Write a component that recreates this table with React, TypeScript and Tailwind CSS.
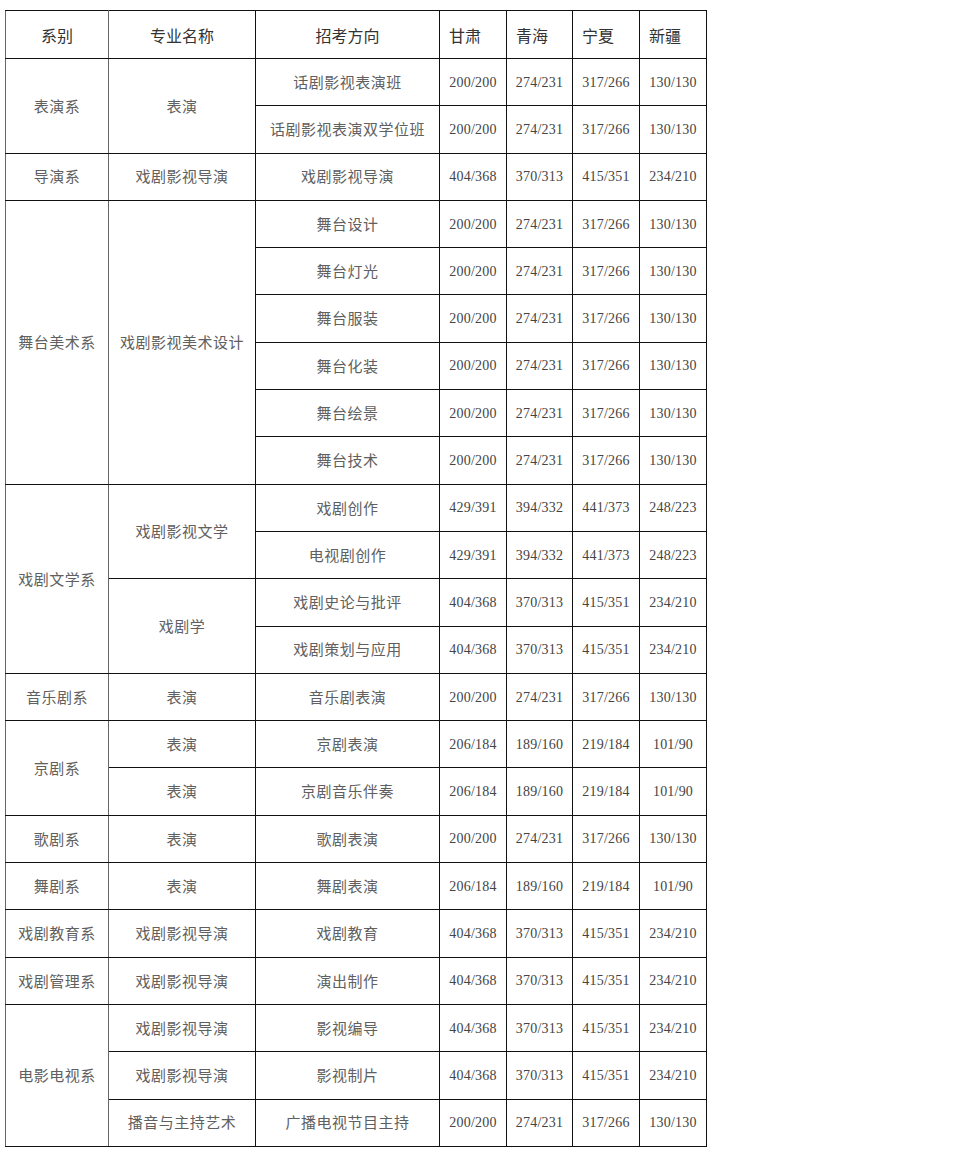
import React from 'react';

type Row = {
  dept?: { name: string; span: number };
  major?: { name: string; span: number };
  dir: string;
  scores: string[];
};

const A = ['200/200', '274/231', '317/266', '130/130'];
const B = ['404/368', '370/313', '415/351', '234/210'];
const C = ['429/391', '394/332', '441/373', '248/223'];
const D = ['206/184', '189/160', '219/184', '101/90'];

const rows: Row[] = [
  { dept: { name: '表演系', span: 2 }, major: { name: '表演', span: 2 }, dir: '话剧影视表演班', scores: A },
  { dir: '话剧影视表演双学位班', scores: A },
  { dept: { name: '导演系', span: 1 }, major: { name: '戏剧影视导演', span: 1 }, dir: '戏剧影视导演', scores: B },
  { dept: { name: '舞台美术系', span: 6 }, major: { name: '戏剧影视美术设计', span: 6 }, dir: '舞台设计', scores: A },
  { dir: '舞台灯光', scores: A },
  { dir: '舞台服装', scores: A },
  { dir: '舞台化装', scores: A },
  { dir: '舞台绘景', scores: A },
  { dir: '舞台技术', scores: A },
  { dept: { name: '戏剧文学系', span: 4 }, major: { name: '戏剧影视文学', span: 2 }, dir: '戏剧创作', scores: C },
  { dir: '电视剧创作', scores: C },
  { major: { name: '戏剧学', span: 2 }, dir: '戏剧史论与批评', scores: B },
  { dir: '戏剧策划与应用', scores: B },
  { dept: { name: '音乐剧系', span: 1 }, major: { name: '表演', span: 1 }, dir: '音乐剧表演', scores: A },
  { dept: { name: '京剧系', span: 2 }, major: { name: '表演', span: 1 }, dir: '京剧表演', scores: D },
  { major: { name: '表演', span: 1 }, dir: '京剧音乐伴奏', scores: D },
  { dept: { name: '歌剧系', span: 1 }, major: { name: '表演', span: 1 }, dir: '歌剧表演', scores: A },
  { dept: { name: '舞剧系', span: 1 }, major: { name: '表演', span: 1 }, dir: '舞剧表演', scores: D },
  { dept: { name: '戏剧教育系', span: 1 }, major: { name: '戏剧影视导演', span: 1 }, dir: '戏剧教育', scores: B },
  { dept: { name: '戏剧管理系', span: 1 }, major: { name: '戏剧影视导演', span: 1 }, dir: '演出制作', scores: B },
  { dept: { name: '电影电视系', span: 3 }, major: { name: '戏剧影视导演', span: 1 }, dir: '影视编导', scores: B },
  { major: { name: '戏剧影视导演', span: 1 }, dir: '影视制片', scores: B },
  { major: { name: '播音与主持艺术', span: 1 }, dir: '广播电视节目主持', scores: A },
];

const cjk = "font-['Noto_Sans_CJK_SC',sans-serif]";
const cell = 'border border-[#111] p-0 align-middle';
const body = `text-center text-[15px] tracking-[0.5px] text-[#606060] ${cjk}`;

const App = () => {
  return (
    <div className="min-h-[1152px] w-[976px] bg-white pl-[5px] pt-[10px]">
      <table className="w-[701px] table-fixed border-collapse border-l border-l-[#666]">
        <colgroup>
          <col className="w-[103px]" />
          <col className="w-[147px]" />
          <col className="w-[184px]" />
          <col className="w-[67px]" />
          <col className="w-[66px]" />
          <col className="w-[67px]" />
          <col className="w-[67px]" />
        </colgroup>
        <thead>
          <tr className="h-[48px]">
            <th className={`${cell} border-l-[#666] border-r-[#666] text-center text-[16px] font-normal text-[#333] ${cjk}`}>系别</th>
            <th className={`${cell} border-l-[#666] text-center text-[16px] font-normal text-[#333] ${cjk}`}>专业名称</th>
            <th className={`${cell} text-center text-[16px] font-normal text-[#333] ${cjk}`}>招考方向</th>
            {['甘肃', '青海', '宁夏', '新疆'].map((p) => (
              <th key={p} className={`${cell} pl-[9px] text-left text-[16px] font-normal text-[#333] ${cjk}`}>
                {p}
              </th>
            ))}
          </tr>
        </thead>
        <tbody>
          {rows.map((r, i) => (
            <tr key={i} className="h-[47.3px]">
              {r.dept && (
                <td rowSpan={r.dept.span} className={`${cell} border-l-[#666] border-r-[#666] ${body}`}>
                  {r.dept.name}
                </td>
              )}
              {r.major && (
                <td rowSpan={r.major.span} className={`${cell} border-l-[#666] ${body}`}>
                  {r.major.name}
                </td>
              )}
              <td className={`${cell} ${body}`}>{r.dir}</td>
              {r.scores.map((s, j) => (
                <td
                  key={j}
                  className={`${cell} text-center font-['Liberation_Serif',serif] text-[14px] tracking-[0.2px] text-[#444]`}
                >
                  {s}
                </td>
              ))}
            </tr>
          ))}
        </tbody>
      </table>
    </div>
  );
};

export default App;
